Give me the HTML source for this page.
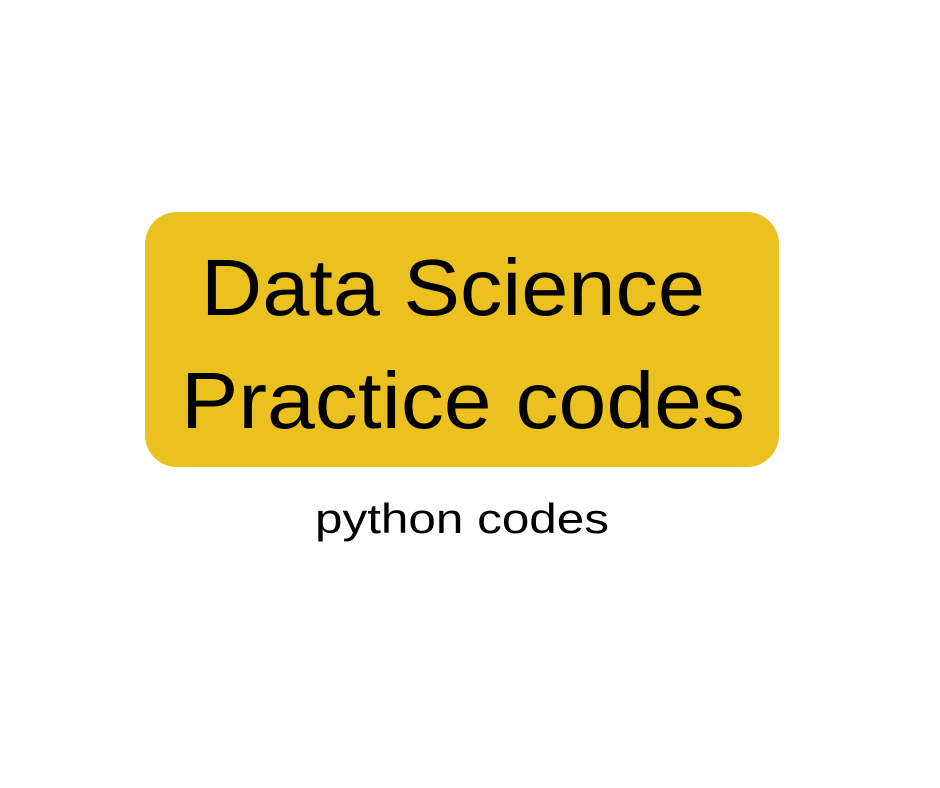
<!DOCTYPE html>
<html><head><style>html,body{margin:0;padding:0;background:#fff;width:940px;height:788px;overflow:hidden}</style></head>
<body>
<svg width="940" height="788" xmlns="http://www.w3.org/2000/svg" style="display:block">
<rect x="145" y="212" width="634" height="255" rx="32" ry="32" fill="#EAC11F"/>
<g font-family="Liberation Sans, sans-serif" fill="#000">
<text x="201" y="315" font-size="80" textLength="504" lengthAdjust="spacingAndGlyphs">Data Science</text>
<text x="181" y="428" font-size="80" textLength="564" lengthAdjust="spacingAndGlyphs">Practice codes</text>
<text x="315" y="533" font-size="42" textLength="294" lengthAdjust="spacingAndGlyphs">python codes</text>
</g>
</svg>
</body></html>
